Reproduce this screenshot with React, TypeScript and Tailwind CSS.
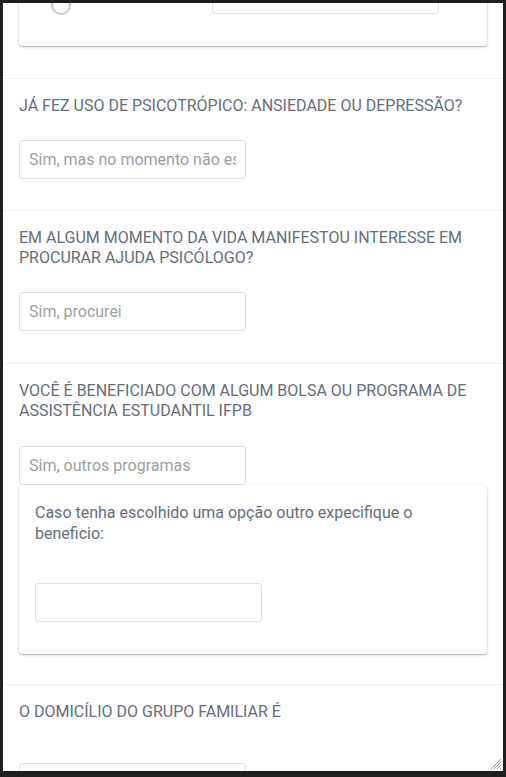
import React from 'react';

const font = { fontFamily: 'Roboto, "Noto Sans", Arial, sans-serif' };

const Field: React.FC<{ placeholder?: string; className?: string }> = ({ placeholder, className = '' }) => (
  <input
    readOnly
    placeholder={placeholder}
    className={`block h-[39px] w-[227px] rounded-[3px] border border-[#e0e0e0] bg-white px-[9px] text-[16px] text-[#333] outline-none placeholder:text-[#9e9e9e] ${className}`}
    style={font}
  />
);

const Section: React.FC<{ title: string; gap?: string; pb?: string; children?: React.ReactNode }> = ({
  title,
  gap = 'mt-[24px]',
  pb = 'pb-[31px]',
  children,
}) => (
  <section className={`border-t border-[#f0f0f0] px-[16px] pt-[17px] ${pb}`}>
    <h3 className="text-[16px] leading-[20px] font-normal uppercase text-[#656e79]">{title}</h3>
    <div className={gap}>{children}</div>
  </section>
);

export default function App() {
  return (
    <div className="h-[777px] w-[506px] bg-[#1f1f1f] px-[3px] pt-[3px] pb-[6px]" style={font}>
      <div className="relative h-full overflow-hidden bg-white">
        {/* scrolled content */}
        <div className="px-[16px] pb-[32px]">
          <div className="-mt-[49px] rounded-[4px] bg-white px-[32px] pt-[21px] pb-[32px] shadow-[0_1px_3px_rgba(0,0,0,0.22),0_1px_1px_rgba(0,0,0,0.12)]">
            <div className="flex h-[39px] items-end gap-[10px]">
              <span className="mb-[-1px] block h-[20px] w-[20px] shrink-0 rounded-full border-2 border-[#c4c7cc]" />
              <span className="mb-[14px] w-[121px] text-[16px] text-[#656e79]">Outro, qual?</span>
              <Field />
            </div>
          </div>
        </div>

        <Section title="Já fez uso de psicotrópico: ansiedade ou depressão?">
          <Field placeholder="Sim, mas no momento não está fazendo uso" />
        </Section>

        <Section title="Em algum momento da vida manifestou interesse em procurar ajuda psicólogo?" pb="pb-[32px]">
          <Field placeholder="Sim, procurei" />
        </Section>

        <Section
          title="Você é beneficiado com algum bolsa ou programa de assistência estudantil IFPB"
          gap="mt-[25px]"
          pb="pb-[30px]"
        >
          <Field placeholder="Sim, outros programas" />
          <div className="rounded-[4px] bg-white px-[16px] pt-[17px] pb-[32px] shadow-[0_1px_3px_rgba(0,0,0,0.22),0_1px_1px_rgba(0,0,0,0.12)]">
            <p className="text-[16px] leading-[21px] text-[#656e79]">
              Caso tenha escolhido uma opção outro expecifique o beneficio:
            </p>
            <Field className="mt-[39px]" />
          </div>
        </Section>

        <Section title="O domicílio do grupo familiar é" gap="mt-[41px]">
          <Field />
        </Section>

        <svg className="absolute right-[1px] bottom-[1px]" width="13" height="13" viewBox="0 0 13 13">
          <path d="M12 2 L2 12 M12 5 L5 12 M12 8 L8 12 M12 11 L11 12" stroke="#9a9a9a" strokeWidth="1" />
        </svg>
      </div>
    </div>
  );
}
